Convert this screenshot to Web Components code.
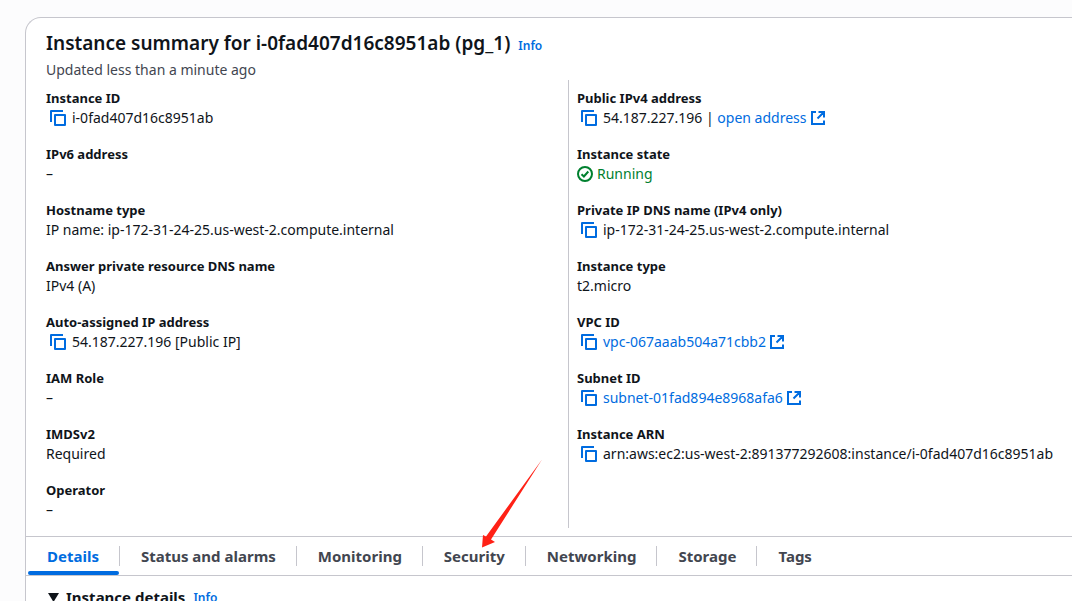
<!DOCTYPE html>
<html lang="en">
<head>
<meta charset="utf-8">
<title>Instance summary</title>
<style>
  html { height: 100%; overflow: hidden; }
  body { margin: 0; height: 100%; overflow: hidden; background: #fcfcfd; color: #0f141a; font: 14px/20px "Noto Sans", "Open Sans", sans-serif;
    --link: #006ce0; --line: #c6c6cd; --muted: #424650; --success: #00802f; }
</style>
</head>
<body>
<instance-page></instance-page>

<template id="t-page">
  <style>
    :host { display: block; padding: 17px 0 0 25px; }
    .columns { display: grid; grid-template-columns: 522fr 504fr; padding-left: 20px; margin-bottom: 8px; }
    .col { display: flex; flex-direction: column; gap: 16px; padding: 8px 0; }
    .col + .col { border-left: 1px solid var(--line); padding-left: 8px; }
  </style>
  <summary-card>
    <card-header>
      <span slot="title">Instance summary for i-0fad407d16c8951ab (pg_1)</span>
      <span slot="description">Updated less than a minute ago</span>
    </card-header>
    <div class="columns">
      <div class="col">
        <key-value label="Instance ID"><copy-text>i-0fad407d16c8951ab</copy-text></key-value>
        <key-value label="IPv6 address">–</key-value>
        <key-value label="Hostname type">IP name: ip-172-31-24-25.us-west-2.compute.internal</key-value>
        <key-value label="Answer private resource DNS name">IPv4 (A)</key-value>
        <key-value label="Auto-assigned IP address"><copy-text>54.187.227.196 [Public IP]</copy-text></key-value>
        <key-value label="IAM Role">–</key-value>
        <key-value label="IMDSv2">Required</key-value>
        <key-value label="Operator">–</key-value>
      </div>
      <div class="col">
        <key-value label="Public IPv4 address"><copy-text>54.187.227.196 | <external-link>open address</external-link></copy-text></key-value>
        <key-value label="Instance state"><status-ok>Running</status-ok></key-value>
        <key-value label="Private IP DNS name (IPv4 only)"><copy-text>ip-172-31-24-25.us-west-2.compute.internal</copy-text></key-value>
        <key-value label="Instance type">t2.micro</key-value>
        <key-value label="VPC ID"><copy-text><external-link>vpc-067aaab504a71cbb2</external-link></copy-text></key-value>
        <key-value label="Subnet ID"><copy-text><external-link>subnet-01fad894e8968afa6</external-link></copy-text></key-value>
        <key-value label="Instance ARN"><copy-text>arn:aws:ec2:us-west-2:891377292608:instance/i-0fad407d16c8951ab</copy-text></key-value>
      </div>
    </div>
    <tab-bar>
      <tab-item active>Details</tab-item>
      <tab-item>Status and alarms</tab-item>
      <tab-item>Monitoring</tab-item>
      <tab-item>Security<pointer-arrow slot="marker"></pointer-arrow></tab-item>
      <tab-item>Networking</tab-item>
      <tab-item>Storage</tab-item>
      <tab-item>Tags</tab-item>
    </tab-bar>
    <expand-section>Instance details</expand-section>
  </summary-card>
</template>

<template id="t-card">
  <style>
    :host { display: block; background: #fff; border: solid var(--line); border-width: 1px 0 0 1px; border-radius: 16px 0 0 0; }
  </style>
  <slot></slot>
</template>

<template id="t-header">
  <style>
    :host { display: block; padding: 11px 20px 0; }
    .row { display: flex; align-items: baseline; gap: 8px; }
    h2 { margin: 0; font-size: 19px; line-height: 28px; font-weight: 600; }
    p { margin: 0; padding-top: 3px; color: var(--muted); }
  </style>
  <div class="row"><h2><slot name="title"></slot></h2><info-link></info-link></div>
  <p><slot name="description"></slot></p>
</template>

<template id="t-info">
  <style>
    :host { display: inline-block; }
    a { color: var(--link); font-size: 12px; line-height: 16px; font-weight: 600; text-decoration: none; }
  </style>
  <a href="#info">Info</a>
</template>

<template id="t-kv">
  <style>
    :host { display: block; white-space: nowrap; }
    dl, dd { margin: 0; }
    dt { font-size: 13px; font-weight: 700; }
  </style>
  <dl><dt></dt><dd><slot></slot></dd></dl>
</template>

<template id="t-copy">
  <style>
    :host { display: flex; align-items: center; gap: 6px; padding-left: 4px; }
    button { display: block; flex: none; padding: 0; border: 0; background: none; color: var(--link); cursor: pointer; }
    svg { display: block; }
  </style>
  <button type="button" aria-label="Copy"><svg width="16" height="16" fill="none" stroke="currentColor" stroke-width="2" stroke-linejoin="round"><path d="M1 12V1h12"/><path d="M5 5h10v10H5z"/></svg></button>
  <span><slot></slot></span>
</template>

<template id="t-ext">
  <style>
    :host { display: inline; }
    a { color: var(--link); text-decoration: none; }
    svg { display: inline-block; vertical-align: -2px; margin-left: 4px; }
  </style>
  <a href="#open"><slot></slot><svg width="14" height="14" fill="none" stroke="currentColor" stroke-width="2" aria-hidden="true"><path d="M5 1H1v12h12V9.500M7.500 1H13v5.500M13 1L6.500 7.500"/></svg></a>
</template>

<template id="t-ok">
  <style>
    :host { display: flex; align-items: center; gap: 4px; color: var(--success); }
  </style>
  <svg width="16" height="16" fill="none" stroke="currentColor" stroke-width="2" aria-hidden="true"><circle cx="8" cy="8" r="7"/><path d="M4.500 8.200l2.400 2.300 4.400-5"/></svg>
  <span><slot></slot></span>
</template>

<template id="t-tabs">
  <style>
    :host { display: flex; align-items: stretch; height: 38px; border: solid var(--line); border-width: 1px 0; }
  </style>
  <slot></slot>
</template>

<template id="t-tab">
  <style>
    :host { display: flex; align-items: center; position: relative; }
    button { border: 0; border-right: 1px solid var(--line); padding: 0 20px 0 21px; background: none; color: var(--muted); font: inherit; font-size: 15px; line-height: 20px; font-weight: 700; white-space: nowrap; cursor: pointer; }
    :host(:last-child) button { border-right-color: transparent; }
    :host([active]) button { color: var(--link); }
    :host([active])::after { content: ""; position: absolute; left: 2px; right: 1px; bottom: 0; height: 4px; border-radius: 2px; background: var(--link); }
  </style>
  <button type="button"><slot></slot></button>
  <slot name="marker"></slot>
</template>

<template id="t-arrow">
  <style>
    :host { display: block; position: absolute; right: -17px; bottom: 26px; width: 62px; height: 90px; pointer-events: none; z-index: 2; }
    svg { display: block; }
  </style>
  <svg width="62" height="90" fill="#ff2116" aria-hidden="true"><path d="M61 .5 L10 80.500 L14 83 L1 88.500 L2 76 L5 77.500 Z"/></svg>
</template>

<template id="t-expand">
  <style>
    :host { display: block; padding: 11px 20px; }
    .row { display: flex; align-items: baseline; gap: 8px; }
    button { display: flex; align-items: center; gap: 7px; border: 0; padding: 0 0 0 2px; background: none; color: inherit; font: inherit; font-size: 15px; line-height: 20px; font-weight: 700; }
  </style>
  <div class="row"><button type="button" aria-expanded="true"><svg width="11" height="10" fill="currentColor" aria-hidden="true"><path d="M0 1h11L5.500 10z"/></svg><span><slot></slot></span></button><info-link></info-link></div>
</template>

<script>
  class Base extends HTMLElement {
    constructor() {
      super();
      this.attachShadow({ mode: "open" })
        .append(document.getElementById(this.constructor.template).content.cloneNode(true));
    }
  }
  const define = (name, template) =>
    customElements.define(name, class extends Base { static template = template; });

  customElements.define("key-value", class extends Base {
    static template = "t-kv";
    connectedCallback() {
      this.shadowRoot.querySelector("dt").textContent = this.getAttribute("label");
    }
  });
  define("summary-card", "t-card");
  define("card-header", "t-header");
  define("info-link", "t-info");
  define("copy-text", "t-copy");
  define("external-link", "t-ext");
  define("status-ok", "t-ok");
  define("tab-bar", "t-tabs");
  define("tab-item", "t-tab");
  define("pointer-arrow", "t-arrow");
  define("expand-section", "t-expand");
  define("instance-page", "t-page");
</script>
</body>
</html>
